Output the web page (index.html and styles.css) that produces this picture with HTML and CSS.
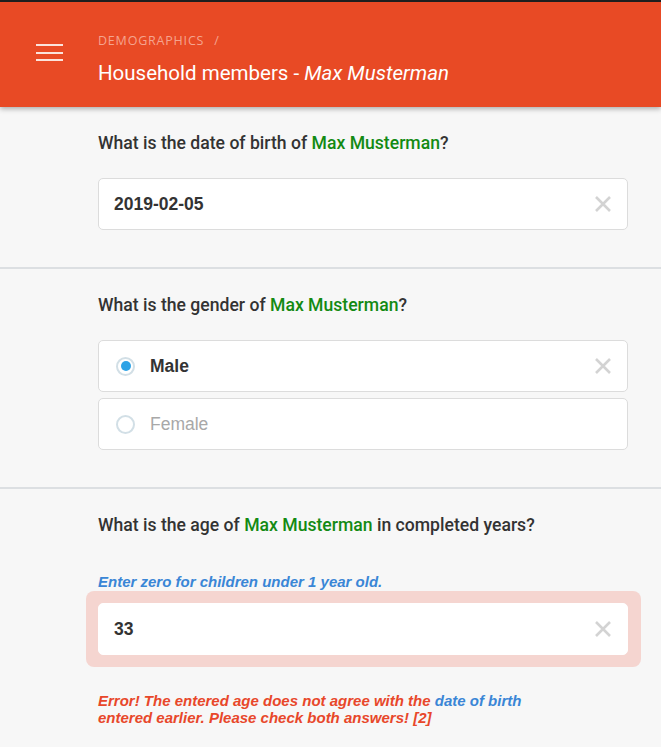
FILE: index.html
```html
<!DOCTYPE html>
<html>
<head>
<meta charset="utf-8">
<link rel="stylesheet" href="styles.css">
</head>
<body>
<header class="topbar">
  <div class="menu-btn" aria-label="Menu">
    <span></span><span></span><span></span>
  </div>
  <div class="titles">
    <div class="crumb">DEMOGRAPHICS <span class="slash">/</span></div>
    <h1 class="title">Household members - <em>Max Musterman</em></h1>
  </div>
</header>

<main>
  <section class="question">
    <h2 class="q-text">What is the date of birth of <span class="name">Max Musterman</span>?</h2>
    <div class="field">
      <span class="value">2019-02-05</span>
      <svg class="clear" viewBox="0 0 16 16" width="16" height="16"><path d="M1 1L15 15M15 1L1 15" stroke="#d3d3d3" stroke-width="2.6" fill="none"/></svg>
    </div>
  </section>

  <section class="question">
    <h2 class="q-text">What is the gender of <span class="name">Max Musterman</span>?</h2>
    <div class="options">
      <div class="field option selected">
        <span class="radio"><span class="dot"></span></span>
        <span class="value">Male</span>
        <svg class="clear" viewBox="0 0 16 16" width="16" height="16"><path d="M1 1L15 15M15 1L1 15" stroke="#d3d3d3" stroke-width="2.6" fill="none"/></svg>
      </div>
      <div class="field option">
        <span class="radio"></span>
        <span class="value muted">Female</span>
      </div>
    </div>
  </section>

  <section class="question last">
    <h2 class="q-text">What is the age of <span class="name">Max Musterman</span> in completed years?</h2>
    <p class="hint">Enter zero for children under 1 year old.</p>
    <div class="error-wrap">
      <div class="field">
        <span class="value">33</span>
        <svg class="clear" viewBox="0 0 16 16" width="16" height="16"><path d="M1 1L15 15M15 1L1 15" stroke="#d3d3d3" stroke-width="2.6" fill="none"/></svg>
      </div>
    </div>
    <p class="error">Error! The entered age does not agree with the <span class="ref">date of birth</span><br>entered earlier. Please check both answers! [2]</p>
  </section>
</main>
</body>
</html>
```

FILE: styles.css
```css
* { box-sizing: border-box; }
html, body { margin: 0; padding: 0; }
body {
  background: #f7f7f7;
  font-family: "Liberation Sans", Arial, sans-serif;
  color: #333;
  border-top: 2px solid #1e1e1e;
  overflow: hidden;
  height: 747px;
}
.topbar {
  background: #e84a25;
  height: 105px;
  display: flex;
  align-items: flex-start;
  box-shadow: 0 2px 5px rgba(0,0,0,0.3);
  position: relative;
  z-index: 1;
}
.menu-btn {
  width: 27px;
  margin: 42px 0 0 36px;
  display: flex;
  flex-direction: column;
  gap: 5.5px;
}
.menu-btn span {
  display: block;
  height: 2px;
  background: #fbe3dc;
}
.titles {
  margin: 31px 0 0 35px;
}
.crumb {
  font-family: "Open Sans", sans-serif;
  font-size: 12.5px;
  font-weight: 500;
  letter-spacing: 0.8px;
  color: #f5a48f;
  line-height: 16px;
}
.crumb .slash { margin-left: 6px; }
.title {
  margin: 12px 0 0;
  font-family: Roboto, sans-serif;
  font-weight: 400;
  font-size: 20.5px;
  line-height: 24px;
  color: #fff;
}
.title em { font-style: italic; }

main { display: block; }
.question {
  padding: 25px 33px 37px 98px;
  border-bottom: 2px solid #dcdfe2;
}
.question.last { border-bottom: none; }
.q-text {
  margin: 0 0 24px;
  font-family: Roboto, sans-serif;
  font-weight: 500;
  font-size: 17.6px;
  line-height: 22px;
  color: #333;
}
.name { color: #138a13; }
.field {
  background: #fff;
  border: 1px solid #dcdcdc;
  border-radius: 5px;
  height: 52px;
  display: flex;
  align-items: center;
  padding: 0 16px 0 15px;
}
.field .value {
  flex: 1;
  font-weight: 700;
  font-size: 17.5px;
  color: #333;
}
.field .value.muted { font-weight: 400; color: #a8a8a8; }
.clear { flex: none; }
.options { display: flex; flex-direction: column; gap: 6px; }
.option { padding-left: 17px; }
.radio {
  width: 19px;
  height: 19px;
  border-radius: 50%;
  border: 2px solid #d2dfe6;
  margin-right: 15px;
  display: flex;
  align-items: center;
  justify-content: center;
  flex: none;
}
.radio .dot {
  width: 10px;
  height: 10px;
  border-radius: 50%;
  background: #2ea3e6;
}
.hint {
  margin: 38px 0 0;
  font-size: 15px;
  font-weight: 700;
  font-style: italic;
  color: #3a86d6;
  line-height: 16px;
}
.error-wrap {
  margin: 1px -13px 0 -12px;
  background: #f5d5d0;
  border-radius: 8px;
  padding: 12px 13px 12px 12px;
}
.error-wrap .field { border-color: #fff; }
.error {
  margin: 25px 0 0;
  font-size: 15px;
  font-weight: 700;
  font-style: italic;
  color: #e8472a;
  line-height: 17px;
}
.error .ref { color: #3a86d6; }
```
